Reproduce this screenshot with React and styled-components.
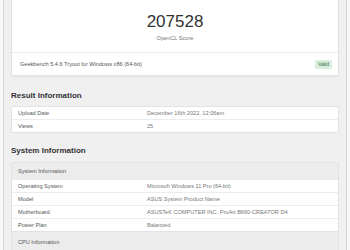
import styled, { createGlobalStyle } from "styled-components";

const GlobalStyle = createGlobalStyle`
  html, body {
    margin: 0;
    padding: 0;
    background: #f7f7f7;
    font-family: "Liberation Sans", Arial, sans-serif;
    color: #333;
  }
`;

export const Page = styled.div`
  width: 350px;
  height: 250px;
  overflow: hidden;
  padding: 0 3px;
  box-sizing: border-box;
`;

export const Column = styled.main`
  height: 100%;
  background: #f0f0f0;
  border-left: 1px solid #d6d6d6;
  border-right: 1px solid #d6d6d6;
  padding: 0 7px;
  box-sizing: border-box;
`;

export const Card = styled.section`
  background: #fff;
  border: 1px solid #e2e2e2;
  border-top: none;
  border-radius: 0 0 2px 2px;
  box-shadow: 0 1px 2px rgba(0, 0, 0, 0.06);
`;

export const ScoreBox = styled.div`
  text-align: center;
  padding: 12px 0 10px;
  border-bottom: 1px solid #ececec;
`;

export const Score = styled.div`
  font-size: 17px;
  line-height: 20px;
  color: #333;
`;

export const ScoreLabel = styled.div`
  margin-top: 2px;
  font-size: 5.6px;
  line-height: 8px;
  color: #777;
`;

export const CardFooter = styled.div`
  height: 22px;
  display: flex;
  align-items: center;
  justify-content: space-between;
  padding: 0 6px 0 8px;
  font-size: 5.6px;
  color: #555;
`;

export const Badge = styled.span`
  background: #d6eedb;
  color: #3d6b47;
  border-radius: 2px;
  font-size: 5px;
  line-height: 9px;
  padding: 0 3px;
`;

export const Heading = styled.h2`
  margin: ${(p) => p.$top}px 0 ${(p) => p.$bottom}px;
  font-size: 8px;
  line-height: 10px;
  font-weight: bold;
  color: #333;
`;

export const Table = styled.div`
  background: #fff;
  border: 1px solid #e2e2e2;
  border-radius: 2px;
`;

export const Row = styled.div`
  display: grid;
  grid-template-columns: 135px 1fr;
  height: 12px;
  align-items: center;
  font-size: 5.6px;
  border-top: 1px solid #ececec;
  &:first-child {
    border-top: none;
  }
`;

export const Label = styled.span`
  padding-left: 6px;
  color: #555;
`;

export const Value = styled.span`
  color: #777;
`;

export const GroupHeader = styled.div`
  height: ${(p) => p.$h}px;
  display: flex;
  align-items: center;
  padding-left: 6px;
  background: #ececec;
  font-size: 5.6px;
  color: #555;
  border-top: 1px solid #e2e2e2;
  &:first-child {
    border-top: none;
  }
`;

const resultRows = [
  ["Upload Date", "December 16th 2022, 12:06am"],
  ["Views", "25"],
];

const systemRows = [
  ["Operating System", "Microsoft Windows 11 Pro (64-bit)"],
  ["Model", "ASUS System Product Name"],
  ["Motherboard", "ASUSTeK COMPUTER INC. ProArt B660-CREATOR D4"],
  ["Power Plan", "Balanced"],
];

const App = () => {
  return (
    <>
      <GlobalStyle />
      <Page>
        <Column>
          <Card>
            <ScoreBox>
              <Score>207528</Score>
              <ScoreLabel>OpenCL Score</ScoreLabel>
            </ScoreBox>
            <CardFooter>
              <span>Geekbench 5.4.6 Tryout for Windows x86 (64-bit)</span>
              <Badge>Valid</Badge>
            </CardFooter>
          </Card>

          <Heading $top={15} $bottom={5}>
            Result Information
          </Heading>
          <Table>
            {resultRows.map(([k, v]) => (
              <Row key={k}>
                <Label>{k}</Label>
                <Value>{v}</Value>
              </Row>
            ))}
          </Table>

          <Heading $top={13} $bottom={6}>
            System Information
          </Heading>
          <Table>
            <GroupHeader $h={16}>System Information</GroupHeader>
            {systemRows.map(([k, v]) => (
              <Row key={k}>
                <Label>{k}</Label>
                <Value>{v}</Value>
              </Row>
            ))}
            <GroupHeader $h={20}>CPU Information</GroupHeader>
          </Table>
        </Column>
      </Page>
    </>
  );
};

export default App;
